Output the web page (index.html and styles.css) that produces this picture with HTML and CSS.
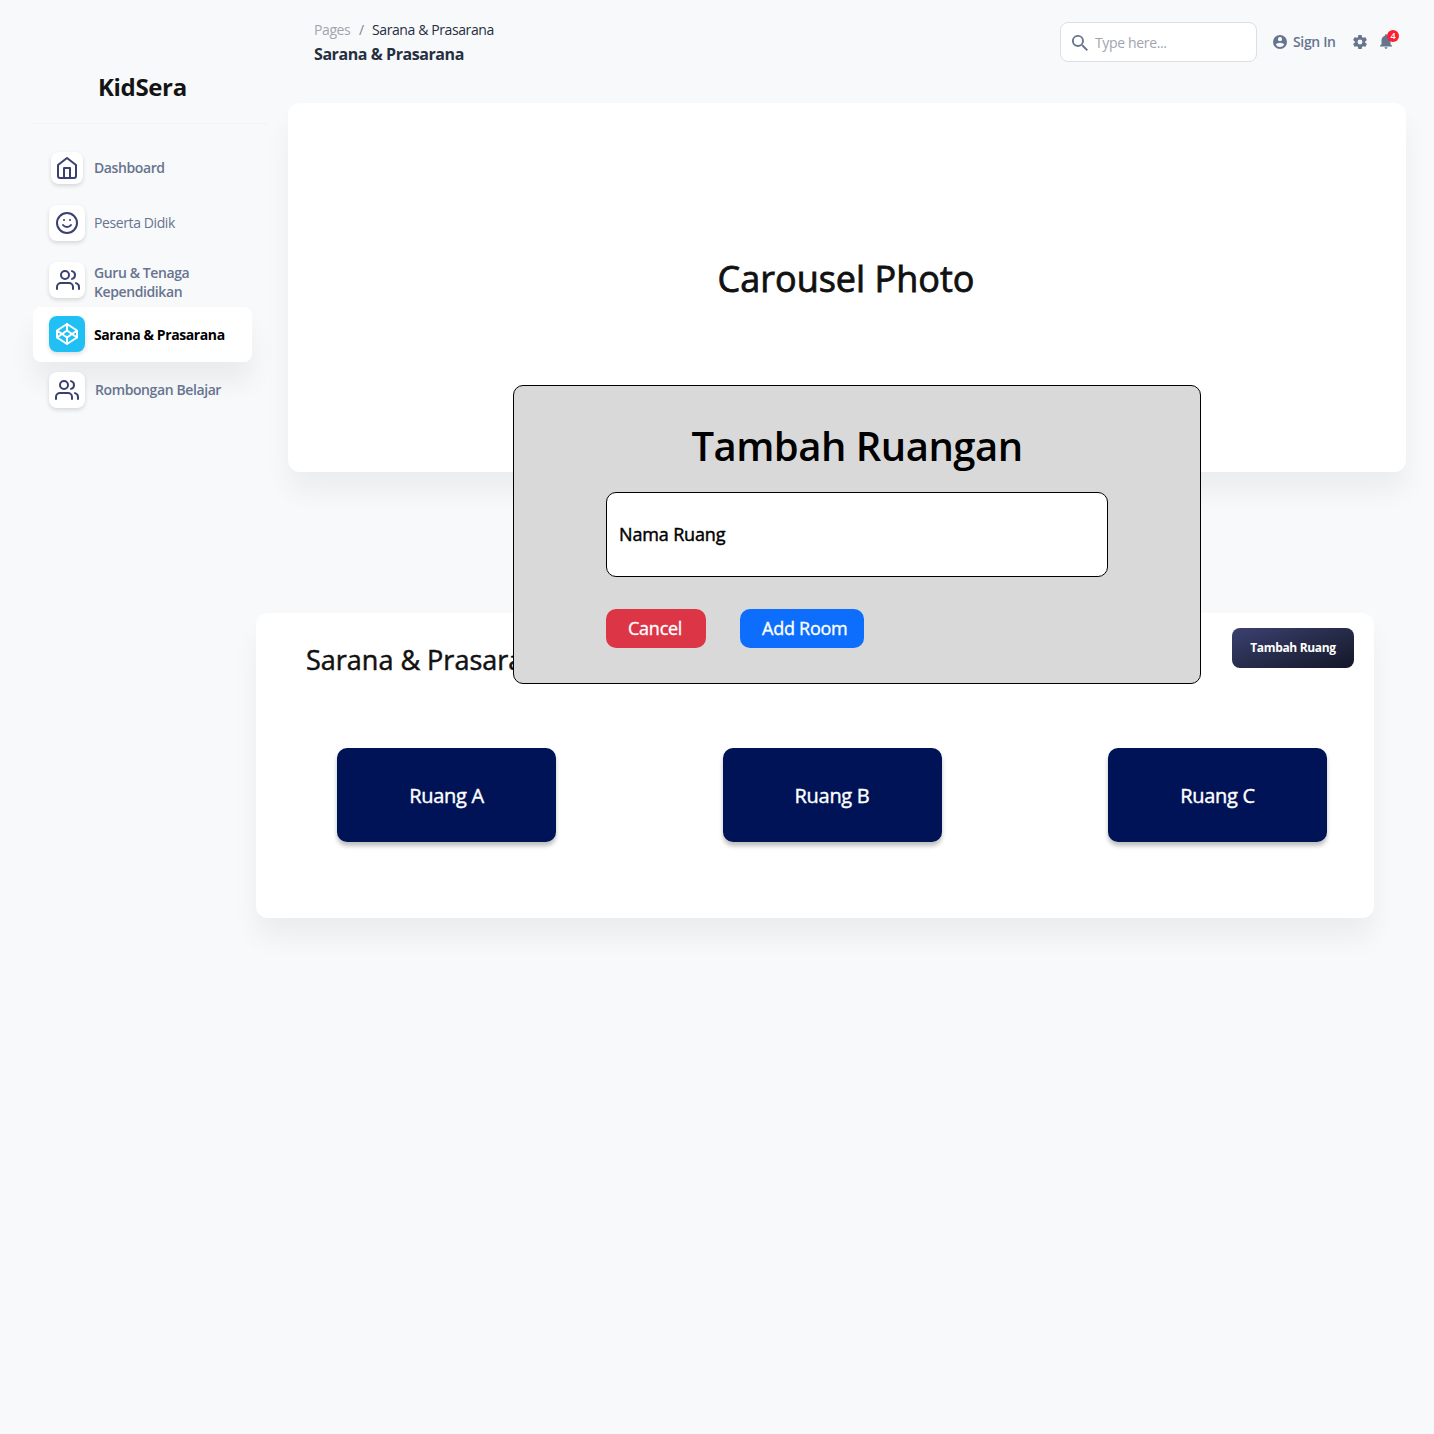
FILE: index.html
```html
<!DOCTYPE html>
<html lang="id">
<head>
<meta charset="utf-8">
<title>KidSera - Sarana &amp; Prasarana</title>
<link rel="stylesheet" href="styles.css">
</head>
<body>
<div class="layout">
  <aside class="sidebar">
    <div class="brand">KidSera</div>
    <nav class="menu">
      <a class="item item-home"><span class="tile tile-small"><svg class="icon" viewBox="0 0 24 24"><path d="M3 9l9-7 9 7v11a2 2 0 0 1-2 2H5a2 2 0 0 1-2-2z"/><path d="M9 22V12h6v10"/></svg></span><span class="label">Dashboard</span></a>
      <a class="item item-student"><span class="tile"><svg class="icon" viewBox="0 0 24 24"><circle cx="12" cy="12" r="10"/><path d="M8 14s1.500 2 4 2 4-2 4-2M9 9h.01M15 9h.01"/></svg></span><span class="label">Peserta Didik</span></a>
      <a class="item item-staff"><span class="tile"><svg class="icon icon-staff" viewBox="0 0 24 24"><path d="M17 21v-2a4 4 0 0 0-4-4H5a4 4 0 0 0-4 4v2"/><circle cx="9" cy="7" r="4"/><path d="M23 21v-2a4 4 0 0 0-3-3.870M16 3.130a4 4 0 0 1 0 7.750"/></svg></span><span class="label">Guru &amp; Tenaga<br>Kependidikan</span></a>
      <a class="item item-active"><span class="tile"><svg class="icon" viewBox="0 0 24 24"><path d="M12 2l10 6.500v7L12 22 2 15.500v-7L12 2zM12 22v-6.500M22 8.500l-10 7-10-7"/><path d="M2 15.500l10-7 10 7M12 2v6.500"/></svg></span><span class="label">Sarana &amp; Prasarana</span></a>
      <a class="item item-group"><span class="tile"><svg class="icon" viewBox="0 0 24 24"><path d="M17 21v-2a4 4 0 0 0-4-4H5a4 4 0 0 0-4 4v2"/><circle cx="9" cy="7" r="4"/><path d="M23 21v-2a4 4 0 0 0-3-3.870M16 3.130a4 4 0 0 1 0 7.750"/></svg></span><span class="label">Rombongan Belajar</span></a>
    </nav>
  </aside>
  <main class="main">
    <header class="topbar">
      <div class="heading">
        <div class="crumbs"><span class="crumb-root">Pages</span><span class="crumb-sep">/</span><span>Sarana &amp; Prasarana</span></div>
        <h1 class="page-title">Sarana &amp; Prasarana</h1>
      </div>
      <div class="search"><svg class="search-icon" viewBox="3 3 17.500 17.500"><path d="M15.500 14h-.79l-.28-.27A6.500 6.500 0 1 0 13.730 14.430l.27.28v.79l5 4.990L20.490 19l-4.990-5zm-6 0a4.500 4.500 0 1 1 0-9 4.500 4.500 0 0 1 0 9z"/></svg><span>Type here...</span></div>
      <div class="signin"><svg class="solid" viewBox="2 2 20 20"><path d="M12 2a10 10 0 1 0 0 20 10 10 0 0 0 0-20zm0 3a3 3 0 1 1 0 6 3 3 0 0 1 0-6zm0 14.200a7.200 7.200 0 0 1-6-3.220c.03-1.990 4-3.080 6-3.080 1.990 0 5.970 1.090 6 3.080a7.200 7.200 0 0 1-6 3.220z"/></svg><span>Sign In</span></div>
      <svg class="solid gear" viewBox="2 2 20 20"><path d="M19.430 12.980c.04-.32.07-.64.07-.98s-.03-.66-.07-.98l2.110-1.650c.19-.15.24-.42.12-.64l-2-3.460c-.12-.22-.39-.3-.61-.22l-2.490 1c-.52-.4-1.080-.73-1.690-.98l-.38-2.650A.49.49 0 0 0 14 2h-4c-.25 0-.46.18-.49.42l-.38 2.650c-.61.25-1.170.59-1.690.98l-2.490-1c-.23-.09-.49 0-.61.22l-2 3.460c-.13.22-.07.49.12.64l2.110 1.650c-.04.32-.07.65-.07.98s.03.66.07.98l-2.110 1.650c-.19.15-.24.42-.12.64l2 3.460c.12.22.39.3.61.22l2.490-1c.52.4 1.080.73 1.690.98l.38 2.650c.03.24.24.42.49.42h4c.25 0 .46-.18.49-.42l.38-2.650c.61-.25 1.170-.59 1.690-.98l2.490 1c.23.09.49 0 .61-.22l2-3.460c.12-.22.07-.49-.12-.64l-2.110-1.650zM12 15.500a3.500 3.500 0 1 1 0-7 3.500 3.500 0 0 1 0 7z"/></svg>
      <div class="bell"><svg class="bell-icon" viewBox="4 2.500 16 19.500"><path d="M12 22c1.100 0 2-.9 2-2h-4c0 1.100.89 2 2 2zm6-6v-5c0-3.070-1.640-5.640-4.500-6.320V4a1.500 1.500 0 0 0-3 0v.68C7.630 5.360 6 7.920 6 11v5l-2 2v1h16v-1l-2-2z"/></svg><span class="badge">4</span></div>
    </header>
    <section class="card carousel"><span>Carousel Photo</span></section>
    <section class="card rooms">
      <div class="rooms-head"><h2 class="rooms-title">Sarana &amp; Prasarana</h2><button class="add-button">Tambah Ruang</button></div>
      <div class="room-list"><a class="room">Ruang A</a><a class="room">Ruang B</a><a class="room">Ruang C</a></div>
    </section>
  </main>
  <div class="dialog">
    <h2 class="dialog-title">Tambah Ruangan</h2>
    <div class="field">Nama Ruang</div>
    <div class="actions"><button class="btn cancel">Cancel</button><button class="btn confirm">Add Room</button></div>
  </div>
</div>
</body>
</html>
```
FILE: styles.css
```css
* { box-sizing: border-box; }
body { margin: 0; background: #f8f9fb; color: #111; font-family: "Open Sans", sans-serif; }
h1, h2 { margin: 0; }
button { border: 0; padding: 0; font-family: inherit; }
.layout { position: relative; display: grid; grid-template-columns: 256px 1118px; height: 1434px; white-space: nowrap; overflow: hidden; }

.brand { height: 124px; margin-left: 33px; width: 234px; padding: 70px 0 0 65px; font-size: 24px; line-height: 34px; font-weight: 700; border-bottom: 1px solid #f3f4f6; letter-spacing: -0.35px; color: #141414; }
.menu { padding: 16px 4px 0 33px; display: flex; flex-direction: column; }
.item { display: flex; align-items: center; gap: 9px; height: 55px; padding-left: 16px; border-radius: 8px; color: #67748e; font-size: 14px; line-height: 19px; font-weight: 600; letter-spacing: -0.4px; }
.item-home { padding-left: 18px; gap: 11px; }
.item-student { font-weight: 400; }
.item-staff { height: 57px; padding-top: 3px; }
.item-staff .label { margin-top: 4px; }
.icon-staff { margin-left: 2px; }
.item-active { background: #fff; color: #000; font-weight: 700; box-shadow: 0 20px 27px rgba(0, 0, 0, .06); }
.item-active .tile { margin-top: -1px; }
.item-group { gap: 10px; }
.tile { flex: none; width: 36px; height: 36px; display: grid; place-items: center; border-radius: 8px; background: #fff; box-shadow: 0 2px 4px rgba(0, 0, 0, .14); }
.tile-small { width: 32px; height: 32px; }
.item-active .tile { background: #21c0f4; }
.icon { width: 24px; height: 24px; fill: none; stroke: #3a416f; stroke-width: 2; stroke-linecap: round; stroke-linejoin: round; }
.item-active .icon { stroke: #fff; }

.topbar { height: 103px; display: flex; padding: 19px 0 0 58px; color: #67748e; margin-right: -32px; }
.heading { width: 746px; color: #252f40; }
.crumbs { display: flex; font-size: 14px; line-height: 22px; letter-spacing: -0.4px; }
.crumb-root { width: 45px; color: #a0a5b0; }
.crumb-sep { width: 13px; color: #7d8490; }
.page-title { font-size: 16px; line-height: 26px; font-weight: 700; letter-spacing: -0.43px; }
.search { width: 197px; height: 40px; margin-top: 3px; border: 1px solid #dcdfe3; border-radius: 8px; background: #fff; display: flex; align-items: center; gap: 7px; padding-left: 11px; color: #9fa4ae; font-size: 14px; letter-spacing: -0.35px; }
.search-icon { width: 16px; height: 16px; margin-top: 1px; fill: #67748e; }
.signin { width: 80px; height: 22px; margin: 12px 0 0 16px; display: flex; align-items: center; gap: 6px; font-size: 14px; line-height: 20px; font-weight: 600; letter-spacing: -0.35px; }
.signin span { margin-top: -1px; }
.solid { width: 14px; height: 14px; fill: #67748e; }
.gear { margin-top: 16px; }
.bell { position: relative; width: 12px; height: 15px; margin: 15px 0 0 13px; }
.bell-icon { display: block; width: 12px; height: 15px; fill: #67748e; }
.badge { position: absolute; left: 7px; top: -4px; width: 12px; height: 12px; border-radius: 50%; background: #fd1f2f; color: #fff; font-size: 9px; line-height: 12px; font-weight: 600; text-align: center; }

.card { background: #fff; border-radius: 12px; box-shadow: 0 20px 27px rgba(0, 0, 0, .05); }
.carousel { height: 369px; width: 1118px; margin-left: 32px; text-align: center; padding: 150px 2px 0 0; font-size: 36px; line-height: 52px; font-weight: 400; -webkit-text-stroke: 0.8px currentColor; }
.rooms { height: 305px; margin-top: 141px; }
.rooms-head { height: 135px; padding: 15px 20px 0 50px; display: flex; justify-content: space-between; }
.rooms-title { font-size: 27px; line-height: 40px; font-weight: 400; -webkit-text-stroke: 0.5px currentColor; margin-top: 12px; }
.add-button { width: 122px; height: 40px; border-radius: 8px; background: linear-gradient(160deg, #3a416f, #141727); color: #fff; font-size: 12px; font-weight: 700; letter-spacing: -0.34px; padding-bottom: 2px; }
.room-list { display: flex; justify-content: space-between; padding: 0 47px 0 81px; }
.room { width: 219px; height: 94px; border-radius: 10px; background: #001356; color: #fff; display: grid; place-items: center; font-size: 20px; font-weight: 400; -webkit-text-stroke: 0.4px currentColor; letter-spacing: -0.3px; box-shadow: 0 4px 4px rgba(0, 0, 0, .25); }

.dialog { position: absolute; left: 513px; top: 385px; width: 688px; height: 299px; border: 1px solid #000; border-radius: 10px; background: #d9d9d9; color: #000; padding: 31px 92px 0; }
.dialog-title { font-size: 40px; line-height: 58px; font-weight: 600; letter-spacing: -0.5px; text-align: center; }
.field { height: 85px; margin-top: 17px; border: 1px solid #000; border-radius: 10px; background: #fff; display: flex; align-items: center; padding: 0 0 2px 12px; font-size: 18px; font-weight: 400; -webkit-text-stroke: 0.45px currentColor; letter-spacing: -0.15px; }
.actions { display: flex; gap: 34px; margin-top: 32px; }
.btn { height: 39px; border-radius: 10px; color: #fff; font-size: 18px; font-weight: 400; -webkit-text-stroke: 0.35px currentColor; letter-spacing: -0.25px; text-align: left; padding: 0 0 2px 22px; }
.cancel { width: 100px; background: #dc3545; }
.confirm { width: 124px; background: #0d6efd; }
```
